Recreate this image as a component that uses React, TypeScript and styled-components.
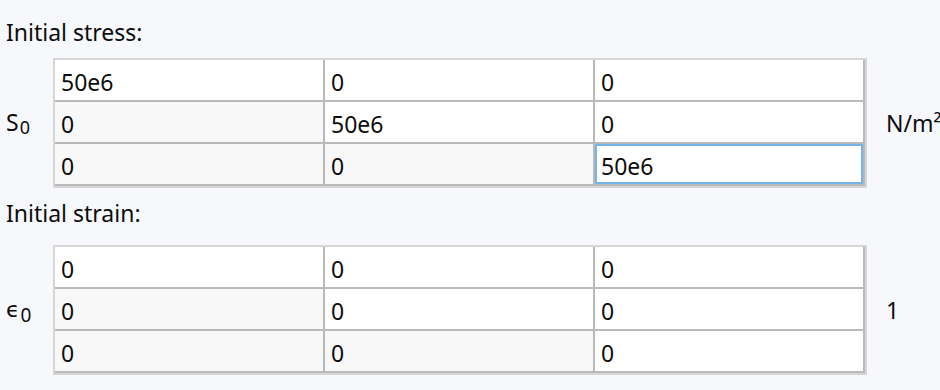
import React from "react";
import styled, { createGlobalStyle } from "styled-components";

const GlobalStyle = createGlobalStyle`
  html, body {
    margin: 0;
    padding: 0;
    background: #f7f8fc;
    overflow: hidden;
  }
  body {
    font-family: "Noto Sans", "Open Sans", "DejaVu Sans", sans-serif;
    color: #0d0d0d;
  }
`;

const Page = styled.div`
  width: 940px;
  height: 390px;
  padding-left: 6px;
  box-sizing: border-box;
  overflow: hidden;
`;

const Heading = styled.div<{ $top: number; $bottom: number }>`
  margin: ${(p) => p.$top}px 0 ${(p) => p.$bottom}px;
  font-size: 23px;
  line-height: 30px;
`;

const MatrixRow = styled.div`
  display: grid;
  grid-template-columns: 47px 814px auto;
  align-items: center;
`;

const Symbol = styled.div<{ $greek?: boolean }>`
  font-family: ${(p) =>
    p.$greek ? '"DejaVu Sans", "Noto Sans", sans-serif' : "inherit"};
  font-size: ${(p) => (p.$greek ? "22px" : "23px")};
  line-height: 30px;
  white-space: nowrap;
`;

const Sub = styled.span<{ $drop: number; $size: number }>`
  font-family: "Noto Sans", "Open Sans", sans-serif;
  font-size: ${(p) => p.$size}px;
  position: relative;
  top: ${(p) => p.$drop}px;
  margin-left: 1px;
`;

const Unit = styled.div`
  padding-left: 19px;
  font-size: 23px;
  line-height: 30px;
  white-space: nowrap;
`;

const Matrix = styled.div`
  display: grid;
  grid-template-columns: repeat(3, 270px);
  border: 2px solid #d6d6d6;
`;

const Cell = styled.div<{ $shaded: boolean; $focused: boolean }>`
  box-sizing: border-box;
  height: 42px;
  padding: 4px 6px 0;
  border-right: 2px solid #b9b9b9;
  border-bottom: 2px solid #b9b9b9;
  background: ${(p) => (p.$shaded ? "#f8f8f8" : "#ffffff")};
  box-shadow: ${(p) => (p.$focused ? "inset 0 0 0 2px #74b4ec" : "none")};
  font-size: 23px;
  line-height: 36px;
  white-space: nowrap;
`;

type MatrixData = {
  values: string[][];
  focus?: [number, number];
};

function MatrixGrid({ values, focus }: MatrixData) {
  return (
    <Matrix>
      {values.map((row, r) =>
        row.map((v, c) => (
          <Cell
            key={`${r}-${c}`}
            $shaded={c < r}
            $focused={!!focus && focus[0] === r && focus[1] === c}
          >
            {v}
          </Cell>
        ))
      )}
    </Matrix>
  );
}

export default function App() {
  return (
    <>
      <GlobalStyle />
      <Page>
        <Heading $top={17} $bottom={11}>
          Initial stress:
        </Heading>
        <MatrixRow>
          <Symbol>
            S
            <Sub $size={18} $drop={3}>
              0
            </Sub>
          </Symbol>
          <MatrixGrid
            values={[
              ["50e6", "0", "0"],
              ["0", "50e6", "0"],
              ["0", "0", "50e6"],
            ]}
            focus={[2, 2]}
          />
          <Unit>N/m²</Unit>
        </MatrixRow>
        <Heading $top={10} $bottom={17}>
          Initial strain:
        </Heading>
        <MatrixRow>
          <Symbol $greek>
            ϵ
            <Sub $size={19} $drop={5}>
              0
            </Sub>
          </Symbol>
          <MatrixGrid
            values={[
              ["0", "0", "0"],
              ["0", "0", "0"],
              ["0", "0", "0"],
            ]}
          />
          <Unit>1</Unit>
        </MatrixRow>
      </Page>
    </>
  );
}
